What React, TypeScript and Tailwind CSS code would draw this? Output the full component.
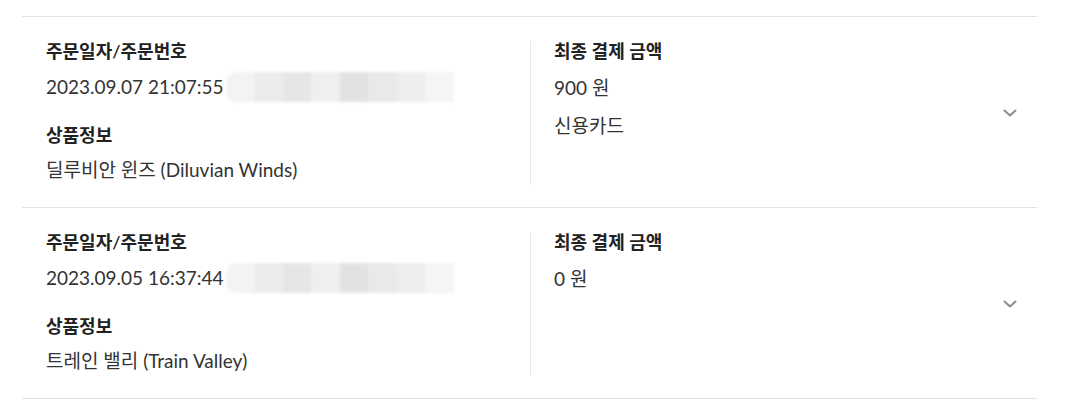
type Order = {
  date: string;
  product: string;
  amount: string;
  method?: string;
};

const orders: Order[] = [
  {
    date: "2023.09.07 21:07:55",
    product: "딜루비안 윈즈 (Diluvian Winds)",
    amount: "900 원",
    method: "신용카드",
  },
  {
    date: "2023.09.05 16:37:44",
    product: "트레인 밸리 (Train Valley)",
    amount: "0 원",
  },
];

function Redacted() {
  return (
    <span className="ml-[2px] inline-flex h-[30px] w-[228px] shrink-0 overflow-hidden rounded-l-[10px] blur-[1.5px]">
      <span className="h-full flex-1 bg-[#f3f3f3]" />
      <span className="h-full flex-1 bg-[#ececec]" />
      <span className="h-full flex-1 bg-[#e6e6e6]" />
      <span className="h-full flex-1 bg-[#efefef]" />
      <span className="h-full flex-1 bg-[#e2e2e2]" />
      <span className="h-full flex-1 bg-[#e9e9e9]" />
      <span className="h-full flex-1 bg-[#eeeeee]" />
      <span className="h-full flex-1 bg-[#f5f5f5]" />
    </span>
  );
}

function Chevron() {
  return (
    <svg width="14" height="8" viewBox="0 0 14 8" fill="none" className="shrink-0">
      <path d="M1.5 1.5 L7 6.5 L12.5 1.5" stroke="#8c8c8c" strokeWidth="2" strokeLinecap="round" strokeLinejoin="round" />
    </svg>
  );
}

function OrderRow({ order }: { order: Order }) {
  return (
    <div className="flex items-center border-b border-[#e2e2e2] pb-[22px] pl-6 pr-5 pt-6">
      <div className="flex h-[144px] w-[484px] flex-col">
        <p className="text-[18px] font-semibold leading-5 text-[#222]">주문일자/주문번호</p>
        <p className="mt-4 flex h-5 items-center text-[19px] leading-5 text-[#333]">
          {order.date}
          <Redacted />
        </p>
        <p className="mt-7 text-[18px] font-semibold leading-5 text-[#222]">상품정보</p>
        <p className="mt-[15px] text-[19px] leading-5 text-[#333]">{order.product}</p>
      </div>
      <div className="flex h-[144px] flex-1 flex-col border-l border-[#e8e8e8] pl-[23px]">
        <p className="text-[18px] font-semibold leading-5 text-[#222]">최종 결제 금액</p>
        <p className="mt-[17px] text-[19px] leading-5 text-[#333]">{order.amount}</p>
        {order.method ? (
          <p className="mt-[18px] text-[19px] leading-5 text-[#333]">{order.method}</p>
        ) : null}
      </div>
      <Chevron />
    </div>
  );
}

export default function App() {
  return (
    <div
      className="h-[401px] w-[1080px] bg-white pl-[22px] pr-[43px] pt-4"
      style={{ fontFamily: '"Lato", "Noto Sans CJK KR", sans-serif' }}
    >
      <div className="border-t border-[#e2e2e2]">
        {orders.map((order) => (
          <OrderRow key={order.date} order={order} />
        ))}
      </div>
    </div>
  );
}
